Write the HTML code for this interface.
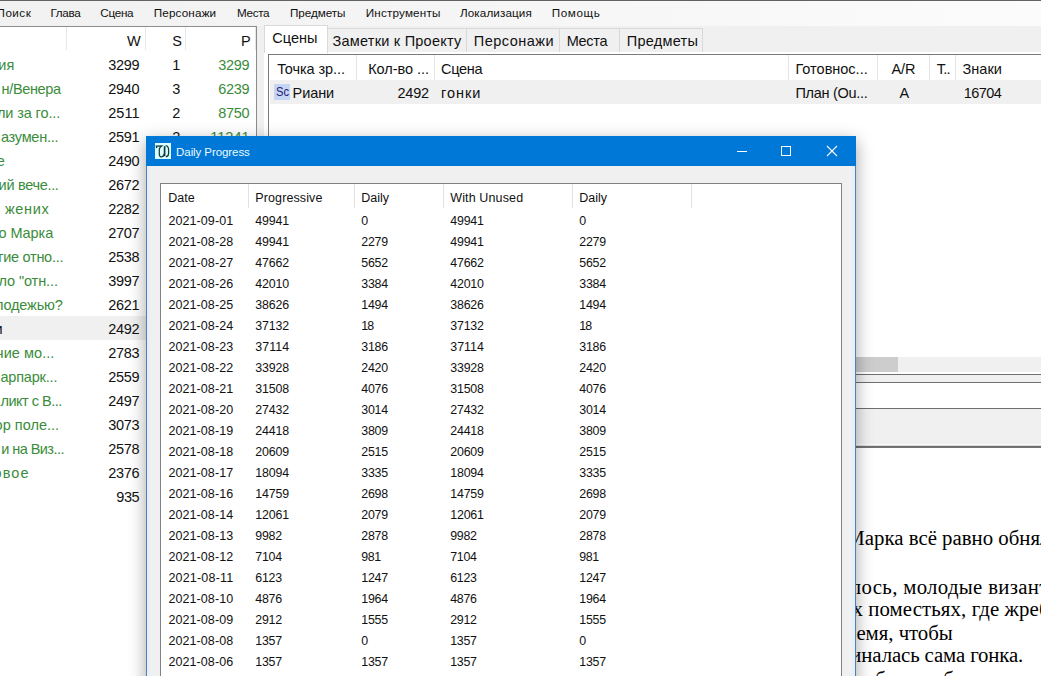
<!DOCTYPE html>
<html lang="ru"><head><meta charset="utf-8"><title>Daily Progress</title>
<style>
*{box-sizing:border-box;margin:0;padding:0}
html,body{width:1041px;height:676px;overflow:hidden;background:#fff}
body{font-family:"Liberation Sans",sans-serif;color:#111}
#app{position:relative;width:1041px;height:676px;overflow:hidden;background:#f0f0f0}
#app>div,#app>svg{position:absolute}
.txt{z-index:3;left:0;top:0;width:1041px;height:676px;overflow:hidden;pointer-events:none}
.txt.top{z-index:6}
.x{position:absolute;white-space:pre;line-height:16px;height:16px}
#menu{left:0;top:0;width:1041px;height:26px;background:linear-gradient(90deg,#f1f1f1,#fbfbfb);border-top:1px solid #626262}
#left{left:0;top:26px;width:257px;height:650px;background:#fff;border-top:1px solid #8c8c8c;border-right:1px solid #8c8c8c}
#left i{position:absolute;top:0;width:1px;height:23px;background:#e6e6e6}
.selrow{position:absolute;left:0;top:289px;width:256px;height:24px;background:#f0f0f0}
#rightbg{left:257px;top:26px;width:784px;height:650px;background:#f0f0f0}
.tab{top:28px;height:24px;border:1px solid #d9d9d9;border-bottom:none;background:#f0f0f0}
.tab.act{top:25px;height:28px;background:#fff;z-index:2}
.pane{left:264px;top:52px;width:777px;height:322px;background:#fff}
.rlist{left:268px;top:54px;width:773px;height:303px;background:#fff;border-left:1px solid #7a7a7a;border-top:1px solid #7a7a7a}
.rlist i{position:absolute;top:0;width:1px;height:25px;background:#e5e5e5;margin-left:-269px}
.rsel{position:absolute;left:1px;top:25px;width:771px;height:24px;background:#f0f0f0}
.sc{position:absolute;left:5px;top:29px;width:16px;height:16px;background:#c6d5f4;color:#1c2470;font-size:13px;line-height:16px;overflow:hidden}
.sc span{position:absolute;left:1.6px;top:0;transform:scaleX(.86);transform-origin:0 0}
.hscroll{left:268px;top:357px;width:773px;height:15px;background:#f0f0f0}
.thumb{position:absolute;left:0;top:0;width:630px;height:15px;background:#cdcdcd}
.bar1{left:268px;top:374px;width:773px;height:9px;border-top:1px solid #6e6e6e;border-bottom:1px solid #6e6e6e;background:#f0f0f0}
.white1{left:268px;top:383px;width:773px;height:25px;background:#fff}
.bar2{left:268px;top:408px;width:773px;height:40px;border-top:1px solid #6e6e6e;border-bottom:2px solid #727272;background:linear-gradient(#f0f0f0,#f0f0f0 35px,#fcfcfc 35px,#fcfcfc 36px,#d8d8d8 36px)}
.white2{left:268px;top:448px;width:773px;height:228px;background:#fff}
.editor{left:0;top:0;width:1041px;height:676px;overflow:hidden;font-family:"Liberation Serif",serif;font-size:20.8px;color:#000}
.editor p{position:absolute;white-space:pre;line-height:23px}
#dlg{z-index:5;left:146px;top:136px;width:710px;height:560px;background:#f0f0f0;border:1px solid #4f82b2;border-top:none;box-shadow:0 5px 16px 0 rgba(0,0,0,.36),inset 0 0 5px 1px #dbeeff}
.tb{position:absolute;left:-1px;top:0;width:710px;height:30px;background:#0078d7}
.ico{position:absolute;left:8px;top:7px}
.wb{position:absolute;top:9px}
.lv{position:absolute;left:13px;top:47px;width:682px;height:520px;background:#fff;border:1px solid #7f8185}
.lv i{position:absolute;top:0;width:1px;height:24px;background:#e2e2e2}
</style></head>
<body>
<div id="app">
<div id="menu"></div>
<div id="left"><i style="left:66px"></i><i style="left:145px"></i><i style="left:185px"></i><i style="left:255px"></i><div class="selrow"></div></div>
<div id="rightbg"></div>
<div class="tab act" style="left:264px;width:64px"></div>
<div class="tab" style="left:327px;width:140px"></div>
<div class="tab" style="left:466px;width:94px"></div>
<div class="tab" style="left:559px;width:61px"></div>
<div class="tab" style="left:619px;width:84px"></div>
<div class="pane"></div>
<div class="rlist"><i style="left:356px"></i><i style="left:434px"></i><i style="left:788px"></i><i style="left:877px"></i><i style="left:929px"></i><i style="left:955px"></i><div class="rsel"></div><div class="sc"><span>Sc</span></div></div>
<div class="hscroll"><div class="thumb"></div></div>
<div class="bar1"></div><div class="white1"></div><div class="bar2"></div><div class="white2"></div>
<div class="editor"><p style="left:846.3px;top:526.3px;letter-spacing:0.01px">Марка всё равно обняла</p><p style="left:839.4px;top:575.0px;letter-spacing:0.32px">илось, молодые византийцы</p><p style="left:841.2px;top:597.4px;letter-spacing:0.11px">их поместьях, где жребий</p><p style="left:846.0px;top:620.8px;letter-spacing:-0.02px">ремя, чтобы</p><p style="left:840.0px;top:643.2px;letter-spacing:-0.12px">чиналась сама гонка.</p><p style="left:813.8px;top:666.9px;letter-spacing:-1.20px">чтобы обходили бы</p></div>
<div class="txt"><span class="x" style="left:-3.5px;top:5px;font-size:11.7px;letter-spacing:0.48px">Поиск</span>
<span class="x" style="left:50.4px;top:5px;font-size:11.7px;letter-spacing:-0.29px">Глава</span>
<span class="x" style="left:100.3px;top:5px;font-size:11.7px;letter-spacing:-0.29px">Сцена</span>
<span class="x" style="left:153.7px;top:5px;font-size:11.7px;letter-spacing:0.16px">Персонажи</span>
<span class="x" style="left:237.0px;top:5px;font-size:11.7px;letter-spacing:-0.36px">Места</span>
<span class="x" style="left:290.0px;top:5px;font-size:11.7px;letter-spacing:-0.05px">Предметы</span>
<span class="x" style="left:365.7px;top:5px;font-size:11.7px;letter-spacing:0.18px">Инструменты</span>
<span class="x" style="left:460.0px;top:5px;font-size:11.7px;letter-spacing:0.10px">Локализация</span>
<span class="x" style="left:551.8px;top:5px;font-size:11.7px;letter-spacing:0.57px">Помощь</span></div>
<div class="txt"><span class="x" style="left:126.9px;top:33px;font-size:14.5px">W</span>
<span class="x" style="left:172.2px;top:33px;font-size:14.5px">S</span>
<span class="x" style="left:241.0px;top:33px;font-size:14.5px">P</span>
<span class="x" style="left:-1.7px;top:57px;font-size:14.5px;color:#3a8c3a">ия</span>
<span class="x" style="left:108.2px;top:57px;font-size:14.5px;letter-spacing:-0.26px;color:#111">3299</span>
<span class="x" style="left:172.3px;top:57px;font-size:14.5px;color:#111">1</span>
<span class="x" style="left:218.2px;top:57px;font-size:14.5px;letter-spacing:-0.26px;color:#3a8c3a">3299</span>
<span class="x" style="left:1.6px;top:81px;font-size:14.5px;letter-spacing:-0.35px;color:#3a8c3a">н/Венера</span>
<span class="x" style="left:108.2px;top:81px;font-size:14.5px;letter-spacing:-0.26px;color:#111">2940</span>
<span class="x" style="left:172.3px;top:81px;font-size:14.5px;color:#111">3</span>
<span class="x" style="left:218.2px;top:81px;font-size:14.5px;letter-spacing:-0.26px;color:#3a8c3a">6239</span>
<span class="x" style="left:-3.0px;top:105px;font-size:14.5px;letter-spacing:-0.12px;color:#3a8c3a">ли за го...</span>
<span class="x" style="left:108.2px;top:105px;font-size:14.5px;letter-spacing:0.10px;color:#111">2511</span>
<span class="x" style="left:172.3px;top:105px;font-size:14.5px;color:#111">2</span>
<span class="x" style="left:218.2px;top:105px;font-size:14.5px;letter-spacing:-0.26px;color:#3a8c3a">8750</span>
<span class="x" style="left:0.9px;top:129px;font-size:14.5px;letter-spacing:-0.24px;color:#3a8c3a">азумен...</span>
<span class="x" style="left:108.2px;top:129px;font-size:14.5px;letter-spacing:-0.26px;color:#111">2591</span>
<span class="x" style="left:172.3px;top:129px;font-size:14.5px;color:#111">2</span>
<span class="x" style="left:210.2px;top:129px;font-size:14.5px;letter-spacing:0.06px;color:#3a8c3a">11241</span>
<span class="x" style="left:-3.3px;top:153px;font-size:14.5px;color:#3a8c3a">е</span>
<span class="x" style="left:108.2px;top:153px;font-size:14.5px;letter-spacing:-0.26px;color:#111">2490</span>
<span class="x" style="left:-1.4px;top:177px;font-size:14.5px;letter-spacing:-0.31px;color:#3a8c3a">ий вече...</span>
<span class="x" style="left:108.2px;top:177px;font-size:14.5px;letter-spacing:-0.26px;color:#111">2672</span>
<span class="x" style="left:0.3px;top:201px;font-size:14.5px;letter-spacing:0.64px;color:#3a8c3a"> жених</span>
<span class="x" style="left:108.2px;top:201px;font-size:14.5px;letter-spacing:-0.26px;color:#111">2282</span>
<span class="x" style="left:-1.6px;top:225px;font-size:14.5px;letter-spacing:-0.05px;color:#3a8c3a">о Марка</span>
<span class="x" style="left:108.2px;top:225px;font-size:14.5px;letter-spacing:-0.26px;color:#111">2707</span>
<span class="x" style="left:-1.8px;top:249px;font-size:14.5px;letter-spacing:-0.28px;color:#3a8c3a">гие отно...</span>
<span class="x" style="left:108.2px;top:249px;font-size:14.5px;letter-spacing:-0.26px;color:#111">2538</span>
<span class="x" style="left:-1.5px;top:273px;font-size:14.5px;letter-spacing:-0.10px;color:#3a8c3a">ло "отн...</span>
<span class="x" style="left:108.2px;top:273px;font-size:14.5px;letter-spacing:-0.26px;color:#111">3997</span>
<span class="x" style="left:-5.1px;top:297px;font-size:14.5px;letter-spacing:-0.14px;color:#3a8c3a">лодежью?</span>
<span class="x" style="left:108.2px;top:297px;font-size:14.5px;letter-spacing:-0.26px;color:#111">2621</span>
<span class="x" style="left:-5.4px;top:321px;font-size:14.5px;color:#111">и</span>
<span class="x" style="left:108.2px;top:321px;font-size:14.5px;letter-spacing:-0.26px;color:#111">2492</span>
<span class="x" style="left:-3.9px;top:345px;font-size:14.5px;letter-spacing:0.04px;color:#3a8c3a">чие мо...</span>
<span class="x" style="left:108.2px;top:345px;font-size:14.5px;letter-spacing:-0.26px;color:#111">2783</span>
<span class="x" style="left:0.4px;top:369px;font-size:14.5px;letter-spacing:-0.18px;color:#3a8c3a">арпарк...</span>
<span class="x" style="left:108.2px;top:369px;font-size:14.5px;letter-spacing:-0.26px;color:#111">2559</span>
<span class="x" style="left:0.5px;top:393px;font-size:14.5px;letter-spacing:-0.50px;color:#3a8c3a">ликт с В...</span>
<span class="x" style="left:108.2px;top:393px;font-size:14.5px;letter-spacing:-0.26px;color:#111">2497</span>
<span class="x" style="left:-5.4px;top:417px;font-size:14.5px;letter-spacing:0.01px;color:#3a8c3a">ор поле...</span>
<span class="x" style="left:108.2px;top:417px;font-size:14.5px;letter-spacing:-0.26px;color:#111">3073</span>
<span class="x" style="left:1.2px;top:441px;font-size:14.5px;letter-spacing:-0.55px;color:#3a8c3a">и на Виз...</span>
<span class="x" style="left:108.2px;top:441px;font-size:14.5px;letter-spacing:-0.26px;color:#111">2578</span>
<span class="x" style="left:-6.5px;top:465px;font-size:14.5px;letter-spacing:1.07px;color:#3a8c3a">овое</span>
<span class="x" style="left:108.2px;top:465px;font-size:14.5px;letter-spacing:-0.26px;color:#111">2376</span>
<span class="x" style="left:116.2px;top:489px;font-size:14.5px;letter-spacing:-0.35px;color:#111">935</span></div>
<div class="txt"><span class="x" style="left:272.3px;top:30px;font-size:14.5px">Сцены</span>
<span class="x" style="left:332.5px;top:33px;font-size:14.5px;letter-spacing:0.23px">Заметки к Проекту</span>
<span class="x" style="left:473.8px;top:33px;font-size:14.5px;letter-spacing:0.49px">Персонажи</span>
<span class="x" style="left:566.7px;top:33px;font-size:14.5px;letter-spacing:-0.33px">Места</span>
<span class="x" style="left:626.7px;top:33px;font-size:14.5px;letter-spacing:0.27px">Предметы</span>
<span class="x" style="left:277.2px;top:61px;font-size:14.5px;letter-spacing:-0.08px">Точка зр...</span>
<span class="x" style="left:368.2px;top:61px;font-size:14.5px;letter-spacing:-0.04px">Кол-во ...</span>
<span class="x" style="left:441.1px;top:61px;font-size:14.5px;letter-spacing:-0.31px">Сцена</span>
<span class="x" style="left:795.5px;top:61px;font-size:14.5px;letter-spacing:-0.01px">Готовнос...</span>
<span class="x" style="left:891.6px;top:61px;font-size:14.5px;letter-spacing:-0.19px">A/R</span>
<span class="x" style="left:936.7px;top:61px;font-size:14.5px;letter-spacing:-0.76px">Т..</span>
<span class="x" style="left:962.5px;top:61px;font-size:14.5px;letter-spacing:0.03px">Знаки</span>
<span class="x" style="left:292.6px;top:85px;font-size:14.5px;letter-spacing:-0.09px">Риани</span>
<span class="x" style="left:397.6px;top:85px;font-size:14.5px;letter-spacing:-0.29px">2492</span>
<span class="x" style="left:441.1px;top:85px;font-size:14.5px;letter-spacing:0.95px">гонки</span>
<span class="x" style="left:795.5px;top:85px;font-size:14.5px;letter-spacing:-0.30px">План (Ou...</span>
<span class="x" style="left:899.6px;top:85px;font-size:14.5px">A</span>
<span class="x" style="left:963.8px;top:85px;font-size:14.5px;letter-spacing:-0.56px">16704</span></div>
<div id="dlg"><div class="tb"></div>
<svg class="ico" width="16" height="16" viewBox="0 0 16 16"><rect width="16" height="16" fill="#dcffff"/><path d="M1.7 5.2L1.3 3.2L6.6 2.9C5 4 4.3 5.3 4.3 7V11.3C4.3 13 5.1 13.8 6.2 13.8C7.6 13.8 8.8 12.8 9.2 11M10.6 2.6C12.5 2.9 13.6 4.4 13.6 6.8V10.2C13.6 12.3 12.6 13.6 10.9 13.8" fill="none" stroke="#153c3c" stroke-width="1.25"/><path d="M9.6 3.2V13.2" stroke="#153c3c" stroke-width="1.7"/></svg>
<svg class="wb" style="left:589px" width="12" height="12" viewBox="0 0 12 12"><path d="M1 6.5h10" stroke="#fff" stroke-width="1"/></svg>
<svg class="wb" style="left:633px" width="12" height="12" viewBox="0 0 12 12"><rect x="1.5" y="1.5" width="9" height="9" fill="none" stroke="#fff" stroke-width="1"/></svg>
<svg class="wb" style="left:679px" width="12" height="12" viewBox="0 0 12 12"><path d="M1 1l10 10M11 1L1 11" stroke="#fff" stroke-width="1.1"/></svg>
<div class="lv"><i style="left:87px"></i><i style="left:193px"></i><i style="left:282px"></i><i style="left:411px"></i><i style="left:530px"></i></div>
</div>
<div class="txt top"><span class="x" style="left:176.1px;top:144px;font-size:11.5px;letter-spacing:-0.08px;color:#eaf8ff">Daily Progress</span>
<span class="x" style="left:168.2px;top:190px;font-size:12.5px">Date</span>
<span class="x" style="left:255.3px;top:190px;font-size:12.5px;letter-spacing:0.11px">Progressive</span>
<span class="x" style="left:361.3px;top:190px;font-size:12.5px;letter-spacing:-0.05px">Daily</span>
<span class="x" style="left:450.2px;top:190px;font-size:12.5px;letter-spacing:0.14px">With Unused</span>
<span class="x" style="left:579.3px;top:190px;font-size:12.5px;letter-spacing:-0.05px">Daily</span>
<span class="x" style="left:168.4px;top:213px;font-size:12.5px;letter-spacing:0.09px">2021-09-01</span>
<span class="x" style="left:255.3px;top:213px;font-size:12.4px;letter-spacing:-0.17px">49941</span>
<span class="x" style="left:361.3px;top:213px;font-size:12.4px">0</span>
<span class="x" style="left:450.2px;top:213px;font-size:12.4px;letter-spacing:-0.17px">49941</span>
<span class="x" style="left:579.3px;top:213px;font-size:12.4px">0</span>
<span class="x" style="left:168.4px;top:234px;font-size:12.5px;letter-spacing:0.09px">2021-08-28</span>
<span class="x" style="left:255.3px;top:234px;font-size:12.4px;letter-spacing:-0.17px">49941</span>
<span class="x" style="left:361.3px;top:234px;font-size:12.4px;letter-spacing:-0.26px">2279</span>
<span class="x" style="left:450.2px;top:234px;font-size:12.4px;letter-spacing:-0.17px">49941</span>
<span class="x" style="left:579.3px;top:234px;font-size:12.4px;letter-spacing:-0.26px">2279</span>
<span class="x" style="left:168.4px;top:255px;font-size:12.5px;letter-spacing:0.09px">2021-08-27</span>
<span class="x" style="left:255.3px;top:255px;font-size:12.4px;letter-spacing:-0.17px">47662</span>
<span class="x" style="left:361.3px;top:255px;font-size:12.4px;letter-spacing:-0.26px">5652</span>
<span class="x" style="left:450.2px;top:255px;font-size:12.4px;letter-spacing:-0.17px">47662</span>
<span class="x" style="left:579.3px;top:255px;font-size:12.4px;letter-spacing:-0.26px">5652</span>
<span class="x" style="left:168.4px;top:276px;font-size:12.5px;letter-spacing:0.09px">2021-08-26</span>
<span class="x" style="left:255.3px;top:276px;font-size:12.4px;letter-spacing:-0.17px">42010</span>
<span class="x" style="left:361.3px;top:276px;font-size:12.4px;letter-spacing:-0.26px">3384</span>
<span class="x" style="left:450.2px;top:276px;font-size:12.4px;letter-spacing:-0.17px">42010</span>
<span class="x" style="left:579.3px;top:276px;font-size:12.4px;letter-spacing:-0.26px">3384</span>
<span class="x" style="left:168.4px;top:297px;font-size:12.5px;letter-spacing:0.09px">2021-08-25</span>
<span class="x" style="left:255.3px;top:297px;font-size:12.4px;letter-spacing:-0.17px">38626</span>
<span class="x" style="left:361.3px;top:297px;font-size:12.4px;letter-spacing:-0.26px">1494</span>
<span class="x" style="left:450.2px;top:297px;font-size:12.4px;letter-spacing:-0.17px">38626</span>
<span class="x" style="left:579.3px;top:297px;font-size:12.4px;letter-spacing:-0.26px">1494</span>
<span class="x" style="left:168.4px;top:318px;font-size:12.5px;letter-spacing:0.09px">2021-08-24</span>
<span class="x" style="left:255.3px;top:318px;font-size:12.4px;letter-spacing:-0.17px">37132</span>
<span class="x" style="left:361.3px;top:318px;font-size:12.4px;letter-spacing:-1.00px">18</span>
<span class="x" style="left:450.2px;top:318px;font-size:12.4px;letter-spacing:-0.17px">37132</span>
<span class="x" style="left:579.3px;top:318px;font-size:12.4px;letter-spacing:-1.00px">18</span>
<span class="x" style="left:168.4px;top:339px;font-size:12.5px;letter-spacing:0.09px">2021-08-23</span>
<span class="x" style="left:255.3px;top:339px;font-size:12.4px;letter-spacing:0.06px">37114</span>
<span class="x" style="left:361.3px;top:339px;font-size:12.4px;letter-spacing:-0.26px">3186</span>
<span class="x" style="left:450.2px;top:339px;font-size:12.4px;letter-spacing:0.06px">37114</span>
<span class="x" style="left:579.3px;top:339px;font-size:12.4px;letter-spacing:-0.26px">3186</span>
<span class="x" style="left:168.4px;top:360px;font-size:12.5px;letter-spacing:0.09px">2021-08-22</span>
<span class="x" style="left:255.3px;top:360px;font-size:12.4px;letter-spacing:-0.17px">33928</span>
<span class="x" style="left:361.3px;top:360px;font-size:12.4px;letter-spacing:-0.26px">2420</span>
<span class="x" style="left:450.2px;top:360px;font-size:12.4px;letter-spacing:-0.17px">33928</span>
<span class="x" style="left:579.3px;top:360px;font-size:12.4px;letter-spacing:-0.26px">2420</span>
<span class="x" style="left:168.4px;top:381px;font-size:12.5px;letter-spacing:0.09px">2021-08-21</span>
<span class="x" style="left:255.3px;top:381px;font-size:12.4px;letter-spacing:-0.17px">31508</span>
<span class="x" style="left:361.3px;top:381px;font-size:12.4px;letter-spacing:-0.26px">4076</span>
<span class="x" style="left:450.2px;top:381px;font-size:12.4px;letter-spacing:-0.17px">31508</span>
<span class="x" style="left:579.3px;top:381px;font-size:12.4px;letter-spacing:-0.26px">4076</span>
<span class="x" style="left:168.4px;top:402px;font-size:12.5px;letter-spacing:0.09px">2021-08-20</span>
<span class="x" style="left:255.3px;top:402px;font-size:12.4px;letter-spacing:-0.17px">27432</span>
<span class="x" style="left:361.3px;top:402px;font-size:12.4px;letter-spacing:-0.26px">3014</span>
<span class="x" style="left:450.2px;top:402px;font-size:12.4px;letter-spacing:-0.17px">27432</span>
<span class="x" style="left:579.3px;top:402px;font-size:12.4px;letter-spacing:-0.26px">3014</span>
<span class="x" style="left:168.4px;top:423px;font-size:12.5px;letter-spacing:0.09px">2021-08-19</span>
<span class="x" style="left:255.3px;top:423px;font-size:12.4px;letter-spacing:-0.17px">24418</span>
<span class="x" style="left:361.3px;top:423px;font-size:12.4px;letter-spacing:-0.26px">3809</span>
<span class="x" style="left:450.2px;top:423px;font-size:12.4px;letter-spacing:-0.17px">24418</span>
<span class="x" style="left:579.3px;top:423px;font-size:12.4px;letter-spacing:-0.26px">3809</span>
<span class="x" style="left:168.4px;top:444px;font-size:12.5px;letter-spacing:0.09px">2021-08-18</span>
<span class="x" style="left:255.3px;top:444px;font-size:12.4px;letter-spacing:-0.17px">20609</span>
<span class="x" style="left:361.3px;top:444px;font-size:12.4px;letter-spacing:-0.26px">2515</span>
<span class="x" style="left:450.2px;top:444px;font-size:12.4px;letter-spacing:-0.17px">20609</span>
<span class="x" style="left:579.3px;top:444px;font-size:12.4px;letter-spacing:-0.26px">2515</span>
<span class="x" style="left:168.4px;top:465px;font-size:12.5px;letter-spacing:0.09px">2021-08-17</span>
<span class="x" style="left:255.3px;top:465px;font-size:12.4px;letter-spacing:-0.17px">18094</span>
<span class="x" style="left:361.3px;top:465px;font-size:12.4px;letter-spacing:-0.26px">3335</span>
<span class="x" style="left:450.2px;top:465px;font-size:12.4px;letter-spacing:-0.17px">18094</span>
<span class="x" style="left:579.3px;top:465px;font-size:12.4px;letter-spacing:-0.26px">3335</span>
<span class="x" style="left:168.4px;top:486px;font-size:12.5px;letter-spacing:0.09px">2021-08-16</span>
<span class="x" style="left:255.3px;top:486px;font-size:12.4px;letter-spacing:-0.17px">14759</span>
<span class="x" style="left:361.3px;top:486px;font-size:12.4px;letter-spacing:-0.26px">2698</span>
<span class="x" style="left:450.2px;top:486px;font-size:12.4px;letter-spacing:-0.17px">14759</span>
<span class="x" style="left:579.3px;top:486px;font-size:12.4px;letter-spacing:-0.26px">2698</span>
<span class="x" style="left:168.4px;top:507px;font-size:12.5px;letter-spacing:0.09px">2021-08-14</span>
<span class="x" style="left:255.3px;top:507px;font-size:12.4px;letter-spacing:-0.17px">12061</span>
<span class="x" style="left:361.3px;top:507px;font-size:12.4px;letter-spacing:-0.26px">2079</span>
<span class="x" style="left:450.2px;top:507px;font-size:12.4px;letter-spacing:-0.17px">12061</span>
<span class="x" style="left:579.3px;top:507px;font-size:12.4px;letter-spacing:-0.26px">2079</span>
<span class="x" style="left:168.4px;top:528px;font-size:12.5px;letter-spacing:0.09px">2021-08-13</span>
<span class="x" style="left:255.3px;top:528px;font-size:12.4px;letter-spacing:-0.26px">9982</span>
<span class="x" style="left:361.3px;top:528px;font-size:12.4px;letter-spacing:-0.26px">2878</span>
<span class="x" style="left:450.2px;top:528px;font-size:12.4px;letter-spacing:-0.26px">9982</span>
<span class="x" style="left:579.3px;top:528px;font-size:12.4px;letter-spacing:-0.26px">2878</span>
<span class="x" style="left:168.4px;top:549px;font-size:12.5px;letter-spacing:0.09px">2021-08-12</span>
<span class="x" style="left:255.3px;top:549px;font-size:12.4px;letter-spacing:-0.26px">7104</span>
<span class="x" style="left:361.3px;top:549px;font-size:12.4px;letter-spacing:-0.44px">981</span>
<span class="x" style="left:450.2px;top:549px;font-size:12.4px;letter-spacing:-0.26px">7104</span>
<span class="x" style="left:579.3px;top:549px;font-size:12.4px;letter-spacing:-0.44px">981</span>
<span class="x" style="left:168.4px;top:570px;font-size:12.5px;letter-spacing:0.20px">2021-08-11</span>
<span class="x" style="left:255.3px;top:570px;font-size:12.4px;letter-spacing:-0.26px">6123</span>
<span class="x" style="left:361.3px;top:570px;font-size:12.4px;letter-spacing:-0.26px">1247</span>
<span class="x" style="left:450.2px;top:570px;font-size:12.4px;letter-spacing:-0.26px">6123</span>
<span class="x" style="left:579.3px;top:570px;font-size:12.4px;letter-spacing:-0.26px">1247</span>
<span class="x" style="left:168.4px;top:591px;font-size:12.5px;letter-spacing:0.09px">2021-08-10</span>
<span class="x" style="left:255.3px;top:591px;font-size:12.4px;letter-spacing:-0.26px">4876</span>
<span class="x" style="left:361.3px;top:591px;font-size:12.4px;letter-spacing:-0.26px">1964</span>
<span class="x" style="left:450.2px;top:591px;font-size:12.4px;letter-spacing:-0.26px">4876</span>
<span class="x" style="left:579.3px;top:591px;font-size:12.4px;letter-spacing:-0.26px">1964</span>
<span class="x" style="left:168.4px;top:612px;font-size:12.5px;letter-spacing:0.09px">2021-08-09</span>
<span class="x" style="left:255.3px;top:612px;font-size:12.4px;letter-spacing:-0.26px">2912</span>
<span class="x" style="left:361.3px;top:612px;font-size:12.4px;letter-spacing:-0.26px">1555</span>
<span class="x" style="left:450.2px;top:612px;font-size:12.4px;letter-spacing:-0.26px">2912</span>
<span class="x" style="left:579.3px;top:612px;font-size:12.4px;letter-spacing:-0.26px">1555</span>
<span class="x" style="left:168.4px;top:633px;font-size:12.5px;letter-spacing:0.09px">2021-08-08</span>
<span class="x" style="left:255.3px;top:633px;font-size:12.4px;letter-spacing:-0.26px">1357</span>
<span class="x" style="left:361.3px;top:633px;font-size:12.4px">0</span>
<span class="x" style="left:450.2px;top:633px;font-size:12.4px;letter-spacing:-0.26px">1357</span>
<span class="x" style="left:579.3px;top:633px;font-size:12.4px">0</span>
<span class="x" style="left:168.4px;top:654px;font-size:12.5px;letter-spacing:0.09px">2021-08-06</span>
<span class="x" style="left:255.3px;top:654px;font-size:12.4px;letter-spacing:-0.26px">1357</span>
<span class="x" style="left:361.3px;top:654px;font-size:12.4px;letter-spacing:-0.26px">1357</span>
<span class="x" style="left:450.2px;top:654px;font-size:12.4px;letter-spacing:-0.26px">1357</span>
<span class="x" style="left:579.3px;top:654px;font-size:12.4px;letter-spacing:-0.26px">1357</span></div>
</div></body></html>
